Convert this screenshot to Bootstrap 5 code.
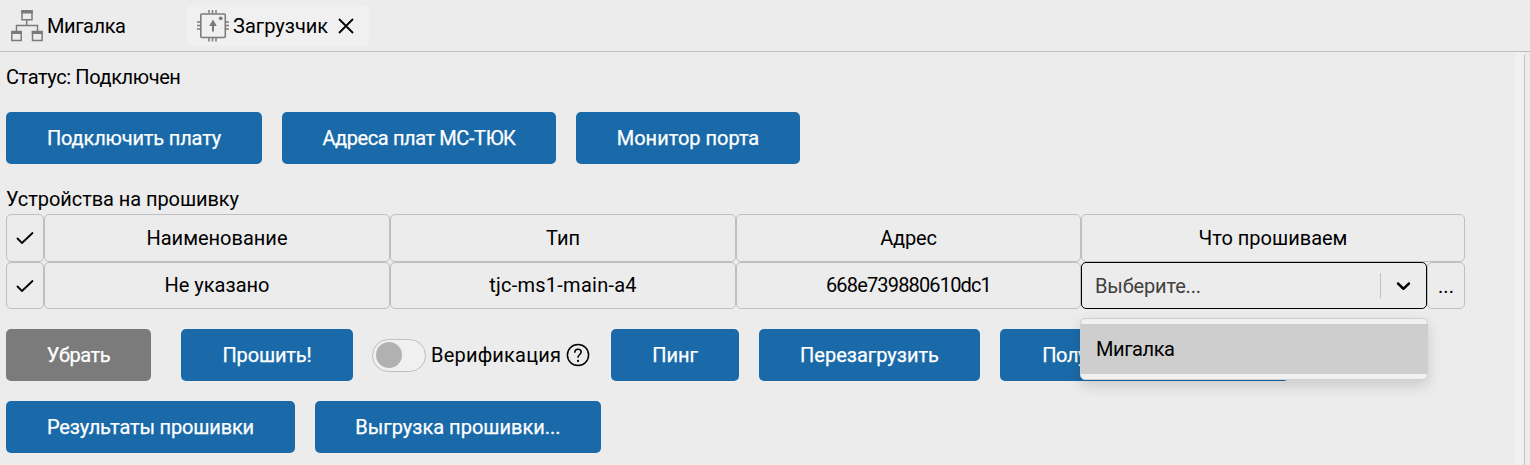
<!DOCTYPE html>
<html lang="ru">
<head>
<meta charset="utf-8">
<meta name="viewport" content="width=device-width, initial-scale=1">
<title>Загрузчик</title>
<link href="https://cdn.jsdelivr.net/npm/bootstrap@5.3.0/dist/css/bootstrap.min.css" rel="stylesheet">
<style>
body{background:#ececec;color:#000;font:20px/28px Roboto,"Noto Sans",sans-serif;height:465px;overflow:hidden}
svg{flex:none;display:block}
.tabs{height:52px;border-bottom:1px solid #bfbfbf;padding:5px 6px}
.tab{height:41px;border-radius:6px;width:181px;padding-left:5px;gap:4px}
.tab.on{background:#f0f0f0;padding-left:10px;width:182px}
.tab.on svg:last-child{margin-left:6px}
.main{width:1515px;height:413px;padding:11px 6px 0}
.side{width:9px;height:413px;background:#f0f0f0}
.edge{flex:1;margin-top:3px;height:410px;border-left:1px solid #bfbfbf}
.btn{--bs-btn-bg:#1a6aa9;--bs-btn-color:#fff;--bs-btn-hover-bg:#155a91;--bs-btn-hover-color:#fff;--bs-btn-border-width:0;--bs-btn-border-radius:5px;--bs-btn-padding-x:0;--bs-btn-padding-y:0;--bs-btn-font-size:20px;--bs-btn-line-height:28px;height:52px;flex:none;white-space:nowrap;-webkit-text-stroke:.25px #fff}
.btn.off{--bs-btn-disabled-bg:#7b7b7b;--bs-btn-disabled-color:#fff;--bs-btn-disabled-opacity:1}
.b145{width:145px}.b172{width:172px}.b256{width:256px}.b274{width:274px}.b224{width:224px}.b128{width:128px}.b221{width:221px}.b289{width:289px}.b286{width:286px}
.gap20{gap:20px}
.heading{margin:21px 0 1px;letter-spacing:-.07px}
.cell{border:1px solid #bfbfbf;border-radius:5px;display:flex;align-items:center;justify-content:center;height:48px;flex:none}
.r2 .cell{height:47px}
.r2 .up{padding-bottom:2px}
.wc{width:38px}.wn{width:346px}.wa{width:345px}.wl{width:384px}
.cell.pick{border-color:#000;justify-content:flex-start;padding-left:13px;color:#404040}
.sep{width:1px;height:25px;background:#bfbfbf;margin-left:auto}
.chev{margin:0 11px}
.pop{top:55px;left:-2px;width:348px;height:62px;background:#f0f0f0;border:1px solid #cfcfcf;border-radius:5px;padding:5px 0;box-shadow:0 6px 14px rgba(0,0,0,.14);z-index:5}
.opt{height:50px;background:#cecece;color:#000;padding:0 15px}
.tgl{width:54px;height:33px;border:1px solid #bfbfbf;border-radius:17px;background:#f0f0f0;padding:2px 3px}
.knob{width:26px;height:26px;border-radius:50%;background:#b1b1b1}
.verify{width:219px;margin-left:-1px}
.t8{letter-spacing:-.84px}.t4{letter-spacing:-.43px}.t3{letter-spacing:-.4px}.t1{letter-spacing:-.16px}.p2{letter-spacing:.2px}.p3{letter-spacing:.25px}
</style>
</head>
<body>
<nav class="tabs d-flex">
  <div class="tab d-flex align-items-center">
    <svg width="32" height="32" viewBox="0 0 32 32" fill="none" stroke="#7b7b7b"><path stroke-width="1.500" d="M11 .8h10v9H11zM.8 21.5h9.4v9H.8zM21.5 21.5h9.6v9h-9.6zM15.700 10v5.500M5.500 21v-5.500h21V21"/><path stroke-width="3" d="M10.300 2h11.400M.1 22.500h10.800M20.800 22.500h11"/></svg>
    <span class="t4">Мигалка</span>
  </div>
  <div class="tab on d-flex align-items-center">
    <svg width="32" height="32" viewBox="0 0 32 32" fill="none" stroke="#7b7b7b"><rect x="3.800" y="4" width="24.500" height="23.500" rx="1" stroke-width="1.600"/><path stroke-width="1.500" d="M12 0v3.500M15.500 0v3.500M19 0v3.500M12 28v3.500M15.500 28v3.500M19 28v3.500M0 12h3.500M0 15.500h3.500M0 19h3.500M28.500 12H32M28.500 15.500H32M28.500 19H32"/><path stroke-width="2" d="M16 13v8.500"/><path fill="#7b7b7b" stroke="none" d="M16 9.500l3.800 6.500h-7.600z"/><circle cx="23.700" cy="8.300" r="1.900" fill="#7b7b7b" stroke="none"/></svg>
    <span>Загрузчик</span>
    <svg width="16" height="16" viewBox="0 0 16 16" fill="none" stroke="#000" stroke-width="1.800"><path d="M1 1l14 14M15 1L1 15"/></svg>
  </div>
</nav>
<div class="d-flex">
  <main class="main">
    <div class="t3">Статус: Подключен</div>
    <div class="d-flex gap20" style="margin-top:21px">
      <button class="btn b256 t1">Подключить плату</button>
      <button class="btn b274 t3">Адреса плат МС-ТЮК</button>
      <button class="btn b224">Монитор порта</button>
    </div>
    <div class="heading">Устройства на прошивку</div>
    <div class="d-flex">
      <div class="cell wc"><svg width="18" height="14" viewBox="0 0 18 14" fill="none" stroke="#000" stroke-width="1.800" stroke-linecap="round" stroke-linejoin="round"><path d="M1.500 7.500l4.500 4.500L16.500 2"/></svg></div>
      <div class="cell wn">Наименование</div>
      <div class="cell wn">Тип</div>
      <div class="cell wa t1">Адрес</div>
      <div class="cell wl">Что прошиваем</div>
    </div>
    <div class="d-flex r2">
      <div class="cell wc"><svg width="18" height="14" viewBox="0 0 18 14" fill="none" stroke="#000" stroke-width="1.800" stroke-linecap="round" stroke-linejoin="round"><path d="M1.500 7.500l4.500 4.500L16.500 2"/></svg></div>
      <div class="cell wn up">Не указано</div>
      <div class="cell wn up p3">tjc-ms1-main-a4</div>
      <div class="cell wa up t8">668e739880610dc1</div>
      <div class="cell wn pick position-relative">
        <span class="t1">Выберите...</span>
        <span class="sep"></span>
        <svg class="chev" width="23" height="23" viewBox="0 0 20 20"><path fill="#000" d="M4.516 7.548c0.436-0.446 1.043-0.481 1.576 0l3.908 3.747 3.908-3.747c0.533-0.481 1.141-0.446 1.574 0 0.436 0.445 0.408 1.197 0 1.615-0.406 0.418-4.695 4.502-4.695 4.502-0.217 0.223-0.502 0.335-0.787 0.335s-0.570-0.112-0.789-0.335c0 0-4.287-4.084-4.695-4.502s-0.436-1.170 0-1.615z"/></svg>
        <div class="pop position-absolute"><div class="opt d-flex align-items-center t4">Мигалка</div></div>
      </div>
      <div class="cell wc">...</div>
    </div>
    <div class="d-flex align-items-center gap20 mt-3 pt-1">
      <button class="btn off b145 t3" disabled>Убрать</button>
      <button class="btn b172 t1" style="margin-left:10px">Прошить!</button>
      <div class="verify d-flex align-items-center">
        <div class="tgl"><div class="knob"></div></div>
        <span class="p2" style="margin-left:5px">Верификация</span>
        <svg class="ms-auto me-1" style="margin-right:1px!important" width="24" height="24" viewBox="0 0 24 24" fill="none" stroke="#000" stroke-width="1.500" stroke-linecap="round"><circle cx="12" cy="12" r="10.600"/><path d="M8.800 9.300c0-4.200 6.400-4 6.400-.2 0 2.300-3.200 2.600-3.200 5.200"/><circle cx="12" cy="18" r=".4"/></svg>
      </div>
      <button class="btn b128">Пинг</button>
      <button class="btn b221">Перезагрузить</button>
      <button class="btn b289 t3">Получить метаданные</button>
    </div>
    <div class="d-flex gap20" style="margin-top:20px">
      <button class="btn b289 t1">Результаты прошивки</button>
      <button class="btn b286">Выгрузка прошивки...</button>
    </div>
  </main>
  <div class="side"></div>
  <div class="edge"></div>
</div>
<script src="https://cdn.jsdelivr.net/npm/bootstrap@5.3.0/dist/js/bootstrap.bundle.min.js"></script>
</body>
</html>
